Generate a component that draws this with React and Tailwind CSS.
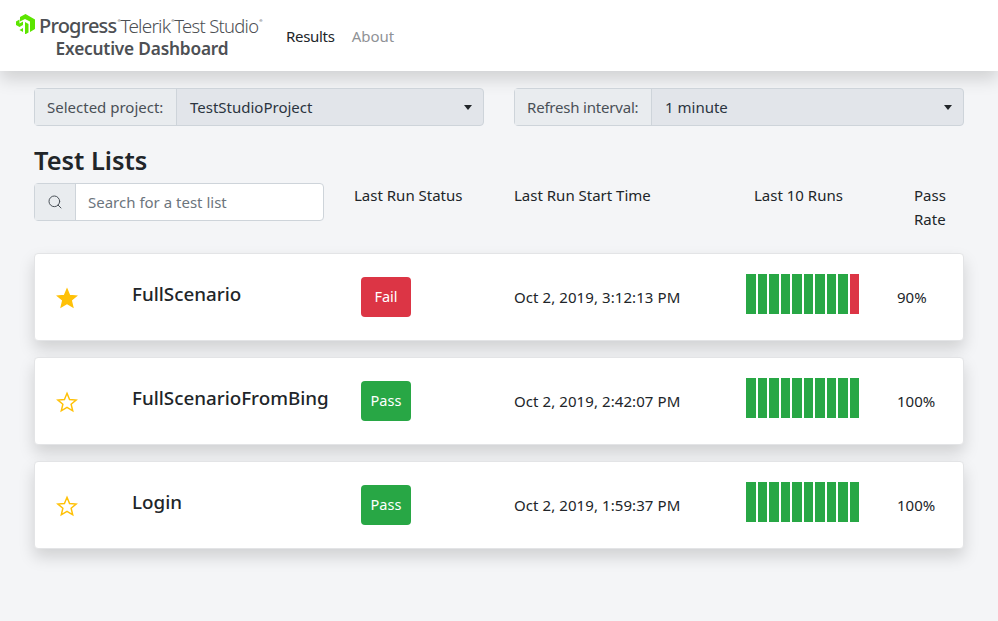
import { Search } from 'lucide-react';

const font = { fontFamily: '"Noto Sans", sans-serif' };

const tests = [
  { name: 'FullScenario', fav: true, status: 'Fail', time: 'Oct 2, 2019, 3:12:13 PM', rate: '90%', fails: 1 },
  { name: 'FullScenarioFromBing', fav: false, status: 'Pass', time: 'Oct 2, 2019, 2:42:07 PM', rate: '100%', fails: 0 },
  { name: 'Login', fav: false, status: 'Pass', time: 'Oct 2, 2019, 1:59:37 PM', rate: '100%', fails: 0 },
];

function Logo() {
  return (
    <svg width="20" height="20" viewBox="0 0 20 20" className="shrink-0">
      <path d="M0 7.5 L3.5 5.5 L3.5 9.5 L7 7.5 L7 11 L3.5 13 L0 11 Z" fill="#5CE500" />
      <path d="M4 3 L9.5 0 L19 5.5 L19 15 L14 18 L14 7.5 L9 5 L4 7.5 Z" fill="#5CE500" />
      <path d="M9 8 L12.5 10 L12.5 18.5 L9 20.5 Z" fill="#5CE500" />
      <path d="M3.5 16 L7 14 L7 18 Z" fill="#5CE500" />
    </svg>
  );
}

function Star({ filled }) {
  return (
    <svg width="22" height="22" viewBox="0 0 24 24" fill={filled ? '#ffc107' : 'none'} stroke="#ffc107" strokeWidth="1.6">
      <path d="M12 2.5 L14.8 9.2 L22 9.8 L16.5 14.5 L18.2 21.6 L12 17.8 L5.8 21.6 L7.5 14.5 L2 9.8 L9.2 9.2 Z" />
    </svg>
  );
}

function SelectGroup({ label, value, labelWidth }) {
  return (
    <div className="flex h-[38px] w-[450px] rounded border border-[#ced4da] bg-[#e2e5ea] text-[15px]">
      <div className={`flex items-center border-r border-[#ced4da] bg-[#e9ecef] pl-3 text-[#495057] ${labelWidth}`}>{label}</div>
      <div className="flex flex-1 items-center justify-between pl-[13px] pr-[11px] text-[#2b3440]">
        <span className="pt-px">{value}</span>
        <span className="h-0 w-0 border-x-[4px] border-t-[5px] border-x-transparent border-t-[#212529]" />
      </div>
    </div>
  );
}

function Runs({ fails }) {
  const runs = Array.from({ length: 10 }, (_, i) => i >= 10 - fails);
  return (
    <div className="mb-[6px] flex h-10 w-[113px] gap-[2px]">
      {runs.map((failed, i) => (
        <div key={i} className={`flex-1 ${failed ? 'bg-[#dc3545]' : 'bg-[#28a745]'}`} />
      ))}
    </div>
  );
}

function TestCard({ test }) {
  return (
    <div className="flex h-[88px] items-center rounded border border-[#e3e4e6] bg-white shadow-[0_8px_16px_rgba(0,0,0,0.15)]">
      <div className="flex w-[97px] pl-[21px] pt-[2px]">
        <Star filled={test.fav} />
      </div>
      <div className="mb-[6px] w-[229px] text-[18.8px] font-medium leading-none text-[#212529]">{test.name}</div>
      <div className="w-[153px]">
        <span className={`flex h-10 w-[50px] items-center justify-center rounded text-[14.5px] text-white ${test.status === 'Fail' ? 'bg-[#dc3545]' : 'bg-[#28a745]'}`}>
          {test.status}
        </span>
      </div>
      <div className="w-[232px] text-[15px] tracking-[0.08px] text-[#212529]">{test.time}</div>
      <div className="w-[151px]">
        <Runs fails={test.fails} />
      </div>
      <div className="text-[15px] text-[#212529]">{test.rate}</div>
    </div>
  );
}

export default function App() {
  return (
    <div className="min-h-[621px] bg-[#f4f5f7]" style={font}>
      <header className="flex h-[71px] items-center bg-white pl-4 shadow-[0_8px_16px_rgba(0,0,0,0.15)]">
        <div className="w-[270px]">
          <div className="flex h-6 items-center text-[#4d5054]">
            <Logo />
            <span className="ml-[3px] mt-[5px] text-[20px] font-medium leading-6 tracking-[-0.8px]">Progress</span>
            <span className="mb-[6px] ml-[1px] w-[3px] text-[4px]">®</span>
            <span className="mt-[5px] text-[19px] font-light leading-6 tracking-[-0.8px]">Telerik</span>
            <span className="mb-[6px] ml-[1px] w-[3px] text-[4px]">®</span>
            <span className="mt-[5px] text-[18.4px] font-light leading-6 tracking-[-0.7px]">Test Studio</span>
            <span className="mb-[6px] ml-[1px] w-[3px] text-[4px]">®</span>
          </div>
          <div className="mt-[2px] w-[252px] text-center text-[17.3px] font-semibold leading-[22px] tracking-[-0.2px] text-[#4d5054]">Executive Dashboard</div>
        </div>
        <nav className="flex gap-[17px] pt-[2px] text-[15px]">
          <a className="tracking-[-0.3px] text-[#212529]">Results</a>
          <a className="text-[#8f9296]">About</a>
        </nav>
      </header>

      <main className="px-[34px] pt-[17px]">
        <div className="flex justify-between">
          <SelectGroup label="Selected project:" value="TestStudioProject" labelWidth="w-[142px]" />
          <SelectGroup label="Refresh interval:" value="1 minute" labelWidth="w-[137px] tracking-[-0.2px]" />
        </div>

        <h1 className="mt-[15px] text-[25.4px] font-semibold leading-[38px] text-[#212529]">Test Lists</h1>

        <div className="mt-[4px] flex h-[70px] text-[15px] text-[#212529]">
          <div className="flex h-[38px] w-[290px] rounded border border-[#ced4da] bg-white">
            <div className="flex w-[41px] items-center justify-center border-r border-[#ced4da] bg-[#e9ecef]">
              <Search size={16} strokeWidth={1.5} className="text-[#495057]" />
            </div>
            <input className="min-w-0 flex-1 pl-3 pt-px text-[15px] placeholder:text-[#6c757d]" placeholder="Search for a test list" />
          </div>
          <div className="ml-[30px] w-[160px] pt-[1px]">Last Run Status</div>
          <div className="w-[240px] pt-[1px]">Last Run Start Time</div>
          <div className="w-[160px] pt-[1px]">Last 10 Runs</div>
          <div className="w-[40px] leading-6">Pass Rate</div>
        </div>

        <div className="flex flex-col gap-[16px]">
          {tests.map((t) => (
            <TestCard key={t.name} test={t} />
          ))}
        </div>
      </main>
    </div>
  );
}
